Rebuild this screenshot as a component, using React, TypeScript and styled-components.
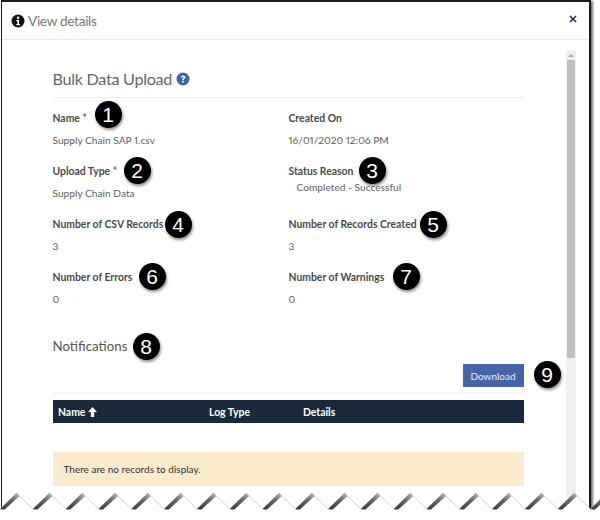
import React from "react";
import styled, { createGlobalStyle } from "styled-components";

const Global = createGlobalStyle`
  html, body { margin: 0; padding: 0; background: #fff; }
  body { font-family: Lato, "Open Sans", sans-serif; font-variant-numeric: proportional-nums; }
`;

const Page = styled.div`
  position: relative;
  width: 600px;
  height: 520px;
  overflow: hidden;
  background: #fff;
`;

const Frame = styled.div`
  box-sizing: border-box;
  width: 590px;
  height: 511px;
  margin-left: 1px;
  border: 2px solid #1a1a1a;
  border-width: 2px 2px 0 1.5px;
  box-shadow: 2px 1px 2px rgba(0, 0, 0, 0.55);
  background: #fff;
  display: flex;
  flex-direction: column;
`;

const Header = styled.header`
  flex: none;
  height: 38px;
  box-sizing: border-box;
  border-bottom: 1px solid #eaeaea;
  display: flex;
  align-items: center;
  padding: 0 10px 0 9px;
  gap: 3px;
`;

const HeaderTitle = styled.h1`
  margin: 0;
  font-size: 13.6px;
  letter-spacing: -0.3px;
  font-weight: 400;
  color: #777;
  flex: 1;
`;

const CloseIcon = styled.svg`
  width: 8px;
  height: 8px;
  margin-top: -4px;
  margin-right: 2px;
`;

const BodyRow = styled.div`
  flex: 1;
  min-height: 0;
  display: flex;
`;

const Content = styled.main`
  width: 471px;
  margin-left: 50.5px;
  padding-top: 26px;
`;

const Title = styled.div`
  display: flex;
  align-items: center;
  gap: 4px;
  height: 32px;
  padding-bottom: 6px;
  box-sizing: border-box;
  border-bottom: 1px solid #eee;
  font-size: 16.2px;
  letter-spacing: -0.3px;
  color: #666;
`;

const Grid = styled.div`
  display: grid;
  grid-template-columns: 236px 235px;
  grid-auto-rows: 53px;
  margin-top: 13px;
`;

const Field = styled.div`
  display: flex;
  flex-direction: column;
`;

const Label = styled.div`
  font-size: 10.4px;
  font-weight: 700;
  line-height: 14px;
  color: #4a4a4a;
`;

const Req = styled.span`
  color: #b5473c;
`;

const Value = styled.div<{ $shift?: boolean }>`
  font-size: 10.2px;
  line-height: 14px;
  color: #5f5f5f;
  margin-top: ${(p) => (p.$shift ? "2px" : "7.5px")};
  margin-left: ${(p) => (p.$shift ? "8px" : "0")};
`;

const SubTitle = styled.h2`
  margin: 12px 0 0;
  padding-top: 2px;
  font-size: 13.3px;
  line-height: 18px;
  font-weight: 400;
  color: #555;
`;

const ButtonRow = styled.div`
  display: flex;
  justify-content: flex-end;
  margin-top: 9px;
  padding-bottom: 5px;
  border-bottom: 2px solid #f6f6f6;
`;

const Button = styled.button`
  width: 61px;
  height: 23px;
  border: none;
  background: #4565a6;
  color: #e8edf6;
  font: 400 10px Lato, sans-serif;
  padding: 0;
`;

const TableHead = styled.div`
  display: grid;
  grid-template-columns: 151px 94px 1fr;
  align-items: center;
  height: 23px;
  margin-top: 6px;
  padding-left: 5.5px;
  background: #1b2a3b;
  color: #fff;
  font-size: 10.4px;
  font-weight: 700;
`;

const NameCell = styled.span`
  display: flex;
  align-items: center;
  gap: 3px;
`;

const Alert = styled.div`
  margin-top: 29px;
  height: 34px;
  display: flex;
  align-items: center;
  padding-left: 11px;
  background: #faebcd;
  color: #333;
  font-size: 10px;
`;

const Scrollbar = styled.div`
  width: 10px;
  margin-left: 42px;
  margin-top: 10px;
  background: #f0f0f0;
  display: flex;
  flex-direction: column;
  align-items: center;
`;

const ScrollUp = styled.div`
  height: 10px;
  display: flex;
  align-items: center;
  &::before {
    content: "";
    border: 3px solid transparent;
    border-top: 0;
    border-bottom-color: #a8a8a8;
  }
`;

const Thumb = styled.div`
  width: 8px;
  height: 298px;
  background: #c1c1c1;
`;

const Badge = styled.div<{ $x: number; $y: number }>`
  position: absolute;
  left: ${(p) => p.$x - 13.5}px;
  top: ${(p) => p.$y - 13.5}px;
  width: 27px;
  height: 27px;
  border-radius: 50%;
  background: #000;
  color: #fff;
  font: 400 21px/27px "Liberation Sans", sans-serif;
  text-align: center;
  box-shadow: 1px 2px 3px rgba(0, 0, 0, 0.45);
`;

const Torn = styled.svg`
  position: absolute;
  left: 0;
  top: 488px;
`;

const badges: [number, number, number][] = [
  [1, 108, 114],
  [2, 137, 170],
  [3, 372, 170],
  [4, 178, 224],
  [5, 433, 224],
  [6, 152, 276],
  [7, 406, 276],
  [8, 146, 346],
  [9, 547, 374],
];

const fields = [
  { label: "Name", req: true, value: "Supply Chain SAP 1.csv" },
  { label: "Created On", value: "16/01/2020 12:06 PM" },
  { label: "Upload Type", req: true, value: "Supply Chain Data" },
  { label: "Status Reason", value: "Completed - Successful", shift: true },
  { label: "Number of CSV Records", value: "3" },
  { label: "Number of Records Created", value: "3" },
  { label: "Number of Errors", value: "0" },
  { label: "Number of Warnings", value: "0" },
];

const PERIOD = 32.8;
const teeth = Array.from({ length: 19 }, (_, i) => i);
const px = (i: number) => 0.2 + PERIOD * i;

function TornEdge() {
  const top = 5;
  const bot = 21;
  let edge = `M${px(0)} ${bot}`;
  teeth.forEach((i) => {
    edge += ` L${px(i) + PERIOD / 2} ${top} L${px(i) + PERIOD} ${bot}`;
  });
  return (
    <Torn width="600" height="32" viewBox="0 0 600 32" aria-hidden="true">
      <defs>
        <linearGradient id="sh" x1="0" y1="1" x2="1" y2="0">
          <stop offset="0" stopColor="#333" />
          <stop offset="0.6" stopColor="#6a6a6a" />
          <stop offset="1" stopColor="#c0c0c0" />
        </linearGradient>
      </defs>
      <path d={`${edge} L600 32 L0 32 Z`} fill="#fff" />
      <path d={edge} fill="none" stroke="#bcbcbc" strokeWidth="0.7" />
      {teeth.map((i) => {
        const x = px(i);
        return (
          <polygon
            key={i}
            points={`${x},${bot} ${x + PERIOD / 2},${top} ${x + PERIOD / 2 + 3},${top + 3} ${x + 4.5},${bot + 0.5} ${x + 1.5},${bot + 0.5}`}
            fill="url(#sh)"
          />
        );
      })}
    </Torn>
  );
}

export default function App() {
  return (
    <Page>
      <Global />
      <Frame>
        <Header>
          <svg width="14" height="14" viewBox="0 0 14 14" aria-hidden="true">
            <circle cx="7" cy="7" r="6.5" fill="#111" />
            <circle cx="7" cy="3.8" r="1.2" fill="#fff" />
            <path d="M5.4 6h2.6v4h1v1.2H5.3V10h1.1V7.2h-1z" fill="#fff" />
          </svg>
          <HeaderTitle>View details</HeaderTitle>
          <CloseIcon viewBox="0 0 8 8" aria-hidden="true">
            <path d="M1 1l6 6M7 1L1 7" stroke="#2c3644" strokeWidth="1.7" />
          </CloseIcon>
        </Header>
        <BodyRow>
          <Content>
            <Title>
              Bulk Data Upload
              <svg width="14" height="14" viewBox="0 0 14 14" aria-hidden="true">
                <circle cx="7" cy="7" r="6.5" fill="#3a66ad" />
                <path
                  d="M4.8 5.4c.1-1.3 1-2 2.3-2s2.2.8 2.2 1.9c0 1.7-1.7 1.6-1.7 3H6.1c0-2 1.6-2 1.6-2.9 0-.4-.3-.7-.7-.7-.5 0-.8.3-.8.8z"
                  fill="#fff"
                />
                <rect x="6.1" y="9" width="1.6" height="1.6" fill="#fff" />
              </svg>
            </Title>
            <Grid>
              {fields.map((f) => (
                <Field key={f.label}>
                  <Label>
                    {f.label}
                    {f.req && <Req> *</Req>}
                  </Label>
                  <Value $shift={f.shift}>{f.value}</Value>
                </Field>
              ))}
            </Grid>
            <SubTitle>Notifications</SubTitle>
            <ButtonRow>
              <Button>Download</Button>
            </ButtonRow>
            <TableHead>
              <NameCell>
                Name
                <svg width="9" height="10" viewBox="0 0 9 10" aria-hidden="true">
                  <path d="M4.5 0L9 5H6.2v5H2.8V5H0z" fill="#fff" />
                </svg>
              </NameCell>
              <span>Log Type</span>
              <span>Details</span>
            </TableHead>
            <Alert>There are no records to display.</Alert>
          </Content>
          <Scrollbar>
            <ScrollUp />
            <Thumb />
          </Scrollbar>
        </BodyRow>
      </Frame>
      <TornEdge />
      {badges.map(([n, x, y]) => (
        <Badge key={n} $x={x} $y={y}>
          {n}
        </Badge>
      ))}
    </Page>
  );
}
